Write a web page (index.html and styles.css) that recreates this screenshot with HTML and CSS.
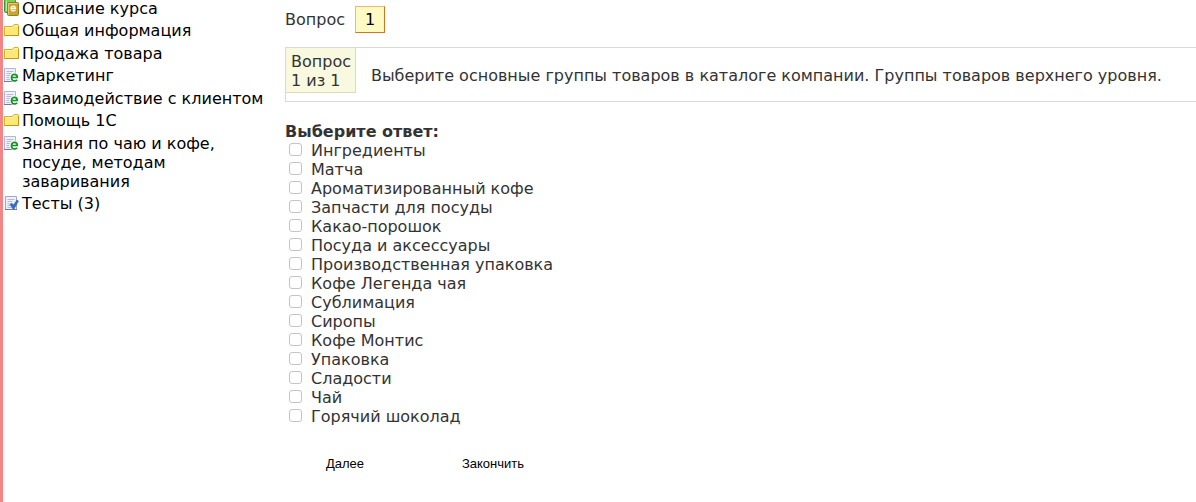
FILE: index.html
```html
<!DOCTYPE html>
<html lang="ru">
<head>
<meta charset="utf-8">
<meta name="viewport" content="width=device-width, initial-scale=1">
<title>Тест</title>
<link rel="stylesheet" href="styles.css">
</head>
<body>
<svg class="sprite" aria-hidden="true">
  <symbol id="course" viewBox="0 0 16 16">
    <rect x=".5" y="-.5" width="11" height="13" rx="1" fill="#78cf58" stroke="#35963a"/>
    <path d="M2.500 1v10" stroke="#b9efa0"/>
    <rect x="3.500" y="2.500" width="11" height="13" rx="1" fill="#c9a238" stroke="#9a7d1c"/>
    <path d="M4.500 14.500v-11h9" fill="none" stroke="#e3c977"/>
    <path d="M7 8.500h4.500c0-3-4.500-3-4.500 0 0 3 3 3 4.500 1.600" fill="none" stroke="#fff9d8" stroke-width="1.300"/>
  </symbol>
  <symbol id="folder" viewBox="0 0 16 16">
    <path d="M.5 13.500v-9h8l1.500-2h4l.5 1v10z" fill="#ffe878" stroke="#dcae1c"/>
    <path d="M1.500 13V5.500h7.500l1.500-2h3" fill="none" stroke="#fff6b8"/>
    <path d="M.5 13.500h14V4" fill="none" stroke="#c99512"/>
  </symbol>
  <symbol id="lesson" viewBox="0 0 16 16">
    <path d="M.5 1.500h11v13H.5z" fill="#f0f1fb" stroke="#b4b6d0"/>
    <path d="M2.500 4.500h7M2.500 6.500h5M2.500 8.500h4M2.500 10.500h3M2.500 12.500h4" stroke="#b6bbdb"/>
    <path d="M0 14.500h12" stroke="#74789d"/>
    <circle cx="10.500" cy="10.500" r="5" fill="#fff" opacity=".75"/>
    <path d="M7.500 10.500h5.800c0-4.300-5.800-4.300-5.800 0 0 4 3.500 4 5.800 2.400" fill="none" stroke="#159328" stroke-width="1.700"/>
  </symbol>
  <symbol id="test" viewBox="0 0 16 16">
    <path d="M1.500 1.500h11v13h-11z" fill="#f0f1fb" stroke="#a2a5c4"/>
    <path d="M3.500 4.500h7M3.500 6.500h5M3.500 8.500h2M3.500 10.500h3M3.500 12.500h4" stroke="#b6bbdb"/>
    <path d="M1 14.500h12" stroke="#74789d"/>
    <path d="M6 9.500l1.500-1.500 2 2 3.500-5 1.500 1-4.500 8h-1z" fill="#306fc6" stroke="#1d519f" stroke-width=".5"/>
  </symbol>
</svg>
<div class="page">
  <nav class="contents">
    <a href="#"><svg class="icon"><use href="#course"/></svg><span>Описание курса</span></a>
    <a href="#"><svg class="icon"><use href="#folder"/></svg><span>Общая информация</span></a>
    <a href="#"><svg class="icon"><use href="#folder"/></svg><span>Продажа товара</span></a>
    <a href="#"><svg class="icon"><use href="#lesson"/></svg><span>Маркетинг</span></a>
    <a href="#"><svg class="icon"><use href="#lesson"/></svg><span>Взаимодействие с клиентом</span></a>
    <a href="#"><svg class="icon"><use href="#folder"/></svg><span>Помощь 1С</span></a>
    <a href="#"><svg class="icon"><use href="#lesson"/></svg><span>Знания по чаю и кофе, посуде, методам заваривания</span></a>
    <a href="#"><svg class="icon"><use href="#test"/></svg><span>Тесты (3)</span></a>
  </nav>
  <main class="quiz">
    <div class="pager"><span>Вопрос</span><a class="pager-current" href="#">1</a></div>
    <div class="question">
      <div class="question-number">Вопрос<br>1 из 1</div>
      <div class="question-text">Выберите основные группы товаров в каталоге компании. Группы товаров верхнего уровня.</div>
    </div>
    <form>
      <fieldset class="answers">
        <legend>Выберите ответ:</legend>
        <label><input type="checkbox">Ингредиенты</label>
        <label><input type="checkbox">Матча</label>
        <label><input type="checkbox">Ароматизированный кофе</label>
        <label><input type="checkbox">Запчасти для посуды</label>
        <label><input type="checkbox">Какао-порошок</label>
        <label><input type="checkbox">Посуда и аксессуары</label>
        <label><input type="checkbox">Производственная упаковка</label>
        <label><input type="checkbox">Кофе Легенда чая</label>
        <label><input type="checkbox">Сублимация</label>
        <label><input type="checkbox">Сиропы</label>
        <label><input type="checkbox">Кофе Монтис</label>
        <label><input type="checkbox">Упаковка</label>
        <label><input type="checkbox">Сладости</label>
        <label><input type="checkbox">Чай</label>
        <label><input type="checkbox">Горячий шоколад</label>
      </fieldset>
      <div class="actions">
        <button type="button">Далее</button>
        <button type="button">Закончить</button>
      </div>
    </form>
  </main>
</div>
</body>
</html>
```
FILE: styles.css
```css
* { box-sizing: border-box; }
body {
  margin: 0;
  background: #fff;
  color: #333;
  font: 16px/19px Verdana, "DejaVu Sans", sans-serif;
}
.sprite { display: none; }
.page {
  display: flex;
  min-height: 100vh;
  border-left: 3px solid #f28585;
}
.contents {
  flex: 0 0 282px;
  margin-top: -1px;
  padding: 0 16px 0 1px;
}
.contents a {
  display: flex;
  gap: 2px;
  margin-bottom: 3px;
  color: #000;
  text-decoration: none;
}
.contents a:nth-child(even) { margin-bottom: 4px; }
.icon {
  flex: none;
  width: 16px;
  height: 16px;
  margin-top: 1px;
}
.quiz {
  flex: 1;
  min-width: 0;
  padding-top: 6px;
}
.pager {
  display: flex;
  align-items: center;
  gap: 10px;
}
.pager-current {
  padding: 3px 9px;
  border: 1px solid;
  border-color: #eeb878 #cf7721 #cf7721 #eeb878;
  background: #fff9c4;
  color: #000;
  text-decoration: none;
}
.question {
  display: flex;
  align-items: flex-start;
  gap: 15px;
  margin-top: 14px;
  padding-bottom: 8px;
  border: solid #d9d9d9;
  border-width: 1px 0 1px 1px;
}
.question-number {
  flex: none;
  padding: 4px 4px 2px 5px;
  border: solid #dcdcb8;
  border-width: 0 1px 1px 0;
  background: #f9f9df;
}
.question-text { padding-top: 18px; }
.answers {
  margin: 20px 0 0;
  padding: 0;
  border: 0;
}
.answers legend {
  padding: 0;
  font-weight: bold;
}
.answers label {
  display: flex;
  align-items: flex-start;
  width: fit-content;
}
.answers input {
  appearance: none;
  width: 13px;
  height: 13px;
  margin: 2px 9px 0 4px;
  border: 1px solid #c4c4c4;
  border-radius: 3px;
  background: #fff;
}
.answers input:checked { background: #306fc6; }
.actions {
  display: flex;
  gap: 28px;
  padding-top: 22px;
}
.actions button {
  width: 120px;
  height: 30px;
  padding: 0;
  border: 0;
  background: none;
  color: #000;
  font: 13px/15px "Liberation Sans", Arial, sans-serif;
}
```
